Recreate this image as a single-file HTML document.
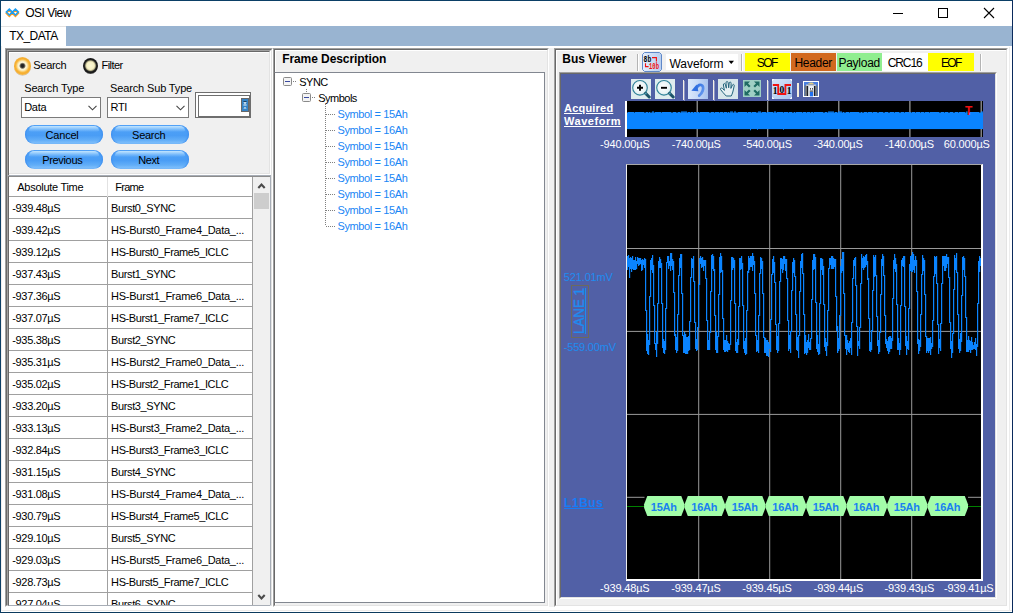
<!DOCTYPE html>
<html><head><meta charset="utf-8"><title>OSI View</title>
<style>
html,body{margin:0;padding:0;}
body{width:1013px;height:613px;overflow:hidden;background:#fff;font-family:"Liberation Sans",sans-serif;font-size:11px;color:#000;position:relative;}
.t{position:absolute;white-space:pre;}
.a{position:absolute;box-sizing:border-box;}
.btn{position:absolute;box-sizing:border-box;border-radius:10px;background:linear-gradient(#5aa8f8 0%,#4c9ff6 35%,#4a9df5 55%,#62aef8 80%,#8cc6fc 100%);box-shadow:inset 1.5px 0 1.5px -0.5px #3f8ff0,inset -1.5px 0 1.5px -0.5px #3f8ff0;}
.btn::before{content:"";position:absolute;left:4px;right:4px;top:1px;height:6px;border-radius:6px 6px 3px 3px/5px 5px 2px 2px;background:linear-gradient(rgba(200,232,255,0.95),rgba(150,205,255,0.55) 60%,rgba(120,190,255,0));}
.combo{position:absolute;box-sizing:border-box;background:#fff;border:1px solid #7a7a7a;}
</style></head><body>

<div class="a" style="left:0;top:0;width:1013px;height:613px;border:1px solid #0b3f66;border-right-color:#0a2a5c;border-bottom-color:#0b3a5e;"></div>
<div class="a" style="left:1px;top:26px;width:1011px;height:1px;background:#e4e4e4;"></div>
<div class="a" style="left:1px;top:610px;width:1011px;height:1px;background:#ececec;"></div>
<div class="a" style="left:1009px;top:47px;width:1px;height:563px;background:#ececec;"></div>
<div class="a" style="left:1px;top:27px;width:1px;height:584px;background:#f1eeee;"></div>
<svg class="a" style="left:5px;top:7px" width="15" height="12" viewBox="0 0 15 12">
<g fill="none" stroke-width="1.55" stroke-linejoin="miter">
<path d="M1.3 5.0 L4.3 2.0 L7.3 5.0 L4.3 8.0 Z M7.4 5.0 L10.4 2.0 L13.4 5.0 L10.4 8.0 Z" stroke="#ff9c1c" transform="translate(0,1.3)"/>
<path d="M1.3 5.0 L4.3 2.0 L7.3 5.0 L4.3 8.0 Z M7.4 5.0 L10.4 2.0 L13.4 5.0 L10.4 8.0 Z" stroke="#1a9df2"/>
</g></svg>
<span class="t" style="left:25.30px;top:7px;font-size:12px;line-height:12px;letter-spacing:-0.525px;">OSI View</span>
<svg class="a" style="left:880px;top:1px" width="130" height="25" viewBox="0 0 130 25">
<g stroke="#000" stroke-width="1" fill="none" shape-rendering="crispEdges">
<path d="M13 12.5 H23"/>
<rect x="58.5" y="7.5" width="9" height="9"/>
</g>
<g stroke="#000" stroke-width="1.1" fill="none"><path d="M104 7 L114 17 M114 7 L104 17"/></g>
</svg>
<div class="a" style="left:1px;top:26px;width:1011px;height:20px;background:#99b4d1;"></div>
<div class="a" style="left:1px;top:26px;width:65px;height:20px;background:#fff;border-top:1px solid #e2e2e2;"></div>
<span class="t" style="left:9.20px;top:30px;font-size:12px;line-height:12px;letter-spacing:-0.533px;">TX_DATA</span>
<div class="a" style="left:5px;top:48px;width:268px;height:559px;background:#f0f0f0;border:1px solid #a0a0a0;border-right-color:#fff;border-bottom-color:#fff;"></div>
<div class="a" style="left:6px;top:49px;width:266px;height:557px;border:1px solid #696969;border-right-color:#e3e3e3;border-bottom-color:#e3e3e3;"></div>
<div class="a" style="left:7px;top:50px;width:264px;height:555px;border:1px solid #a0a0a0;border-right-color:#fff;border-bottom-color:#fff;"></div>
<div class="a" style="left:8px;top:51px;width:262px;height:553px;border:1px solid #696969;border-right-color:#e3e3e3;border-bottom-color:#e3e3e3;"></div>
<div class="a" style="left:9px;top:52px;width:260px;height:1px;background:#fff;"></div>
<div class="a" style="left:9px;top:52px;width:1px;height:122px;background:#fff;"></div>
<div class="a" style="left:14px;top:57px;width:17px;height:17.5px;border-radius:50%;background:radial-gradient(circle at 50% 49%,#1d1d1d 0,#2a2a2a 1.6px,#8d8672 2.6px,#fbf4d6 3.4px,#fdf3cf 4.2px,#fbd98a 5.4px,#f8b73e 6.6px,#f6ae2e 7.6px,#f4b547 8.8px);box-shadow:0 0.5px 0.5px rgba(150,110,40,0.5);"></div>
<div class="a" style="left:83px;top:58px;width:15px;height:16px;border-radius:50%;background:radial-gradient(circle at 50% 48%,#fcf8d4 0,#f6f0c4 3.8px,#bdb78f 4.8px,#3a3a32 5.7px,#161616 6.4px,#1c1c1c 7.2px,#4a4a4a 8px);"></div>
<span class="t" style="left:33.30px;top:60px;font-size:11px;line-height:11px;letter-spacing:-0.309px;">Search</span>
<span class="t" style="left:101.50px;top:60px;font-size:11px;line-height:11px;letter-spacing:-0.540px;">Filter</span>
<span class="t" style="left:24.20px;top:83px;font-size:11px;line-height:11px;letter-spacing:-0.141px;">Search Type</span>
<span class="t" style="left:110.10px;top:83px;font-size:11px;line-height:11px;letter-spacing:-0.146px;">Search Sub Type</span>
<div class="combo" style="left:21px;top:97px;width:80px;height:21px;"><svg class="a" style="left:66px;top:7px" width="9" height="6" viewBox="0 0 9 6"><path d="M0.5 0.8 L4.5 4.8 L8.5 0.8" fill="none" stroke="#444" stroke-width="1.1"/></svg></div>
<div class="combo" style="left:107px;top:97px;width:82px;height:21px;"><svg class="a" style="left:68px;top:7px" width="9" height="6" viewBox="0 0 9 6"><path d="M0.5 0.8 L4.5 4.8 L8.5 0.8" fill="none" stroke="#444" stroke-width="1.1"/></svg></div>
<span class="t" style="left:24.20px;top:102px;font-size:11px;line-height:11px;letter-spacing:-0.309px;">Data</span>
<span class="t" style="left:110.50px;top:102px;font-size:11px;line-height:11px;letter-spacing:-0.340px;">RTI</span>
<div class="a" style="left:195px;top:92px;width:56px;height:26px;border:1px solid #6e6e6e;background:#fff;"></div>
<div class="a" style="left:198px;top:95px;width:52px;height:22px;border:1px solid #6e6e6e;background:#fff;"></div>
<svg class="a" style="left:241px;top:98px" width="8" height="14" viewBox="0 0 8 14"><rect x="0" y="0" width="8" height="14" fill="#686868"/><rect x="1" y="1" width="6" height="12" fill="#3584c8"/>
<path d="M2.4 3.2 H5.6 V4 H2.4 Z" fill="#16324c"/><path d="M2.4 4.2 H5.6 L4.6 5.8 H3.4 Z M2.4 6.6 H5.6 V7.4 H2.4 Z M2.4 10.6 Q4 7.8 5.6 10.6 Z" fill="#f2f7fb"/></svg>
<div class="btn" style="left:25px;top:125px;width:78px;height:19px;"></div>
<span class="t" style="left:45.60px;top:130px;font-size:11px;line-height:11px;letter-spacing:-0.207px;">Cancel</span>
<div class="btn" style="left:111px;top:125px;width:78px;height:19px;"></div>
<span class="t" style="left:132.10px;top:130px;font-size:11px;line-height:11px;letter-spacing:-0.275px;">Search</span>
<div class="btn" style="left:25px;top:150px;width:78px;height:19px;"></div>
<span class="t" style="left:42.30px;top:155px;font-size:11px;line-height:11px;letter-spacing:-0.349px;">Previous</span>
<div class="btn" style="left:111px;top:150px;width:78px;height:19px;"></div>
<span class="t" style="left:138.30px;top:155px;font-size:11px;line-height:11px;letter-spacing:-0.454px;">Next</span>
<div class="a" style="left:9px;top:173px;width:261px;height:1px;background:#e3e3e3;"></div><div class="a" style="left:9px;top:174px;width:262px;height:1px;background:#fff;"></div>
<div class="a" style="left:7px;top:175px;width:264px;height:431px;border:1px solid #a7adb6;border-left-color:#a0a0a0;border-bottom-color:#fff;"></div>
<div class="a" style="left:8px;top:176px;width:262px;height:430px;border:1px solid #8c8c8c;border-left-color:#696969;border-right:none;border-bottom-color:#a7adb6;background:#fff;overflow:hidden;" id="grid">
<div class="a" style="left:0;top:19px;width:244px;height:1px;background:#a0a0a0;"></div>
<div class="a" style="left:98px;top:0;width:1px;height:20px;background:#e2e2e2;"></div>
<div class="a" style="left:98px;top:20px;width:1px;height:420px;background:#a0a0a0;"></div>
<div class="a" style="left:243px;top:0;width:1px;height:440px;background:#a0a0a0;"></div>
<span class="t" style="left:8.30px;top:5px;font-size:11px;line-height:11px;letter-spacing:-0.284px;">Absolute Time</span>
<span class="t" style="left:106.20px;top:5px;font-size:11px;line-height:11px;letter-spacing:-0.716px;">Frame</span>
<span class="t" style="left:3.20px;top:26px;font-size:11px;line-height:11px;letter-spacing:-0.309px;">-939.48µS</span>
<span class="t" style="left:102.10px;top:26px;font-size:11px;line-height:11px;letter-spacing:-0.388px;">Burst0_SYNC</span>
<div class="a" style="left:0;top:41px;width:244px;height:1px;background:#a0a0a0;"></div>
<span class="t" style="left:3.20px;top:48px;font-size:11px;line-height:11px;letter-spacing:-0.309px;">-939.42µS</span>
<span class="t" style="left:102.10px;top:48px;font-size:11px;line-height:11px;letter-spacing:-0.255px;">HS-Burst0_Frame4_Data_...</span>
<div class="a" style="left:0;top:63px;width:244px;height:1px;background:#a0a0a0;"></div>
<span class="t" style="left:3.20px;top:70px;font-size:11px;line-height:11px;letter-spacing:-0.309px;">-939.12µS</span>
<span class="t" style="left:102.10px;top:70px;font-size:11px;line-height:11px;letter-spacing:-0.411px;">HS-Burst0_Frame5_ICLC</span>
<div class="a" style="left:0;top:85px;width:244px;height:1px;background:#a0a0a0;"></div>
<span class="t" style="left:3.20px;top:92px;font-size:11px;line-height:11px;letter-spacing:-0.309px;">-937.43µS</span>
<span class="t" style="left:102.10px;top:92px;font-size:11px;line-height:11px;letter-spacing:-0.388px;">Burst1_SYNC</span>
<div class="a" style="left:0;top:107px;width:244px;height:1px;background:#a0a0a0;"></div>
<span class="t" style="left:3.20px;top:114px;font-size:11px;line-height:11px;letter-spacing:-0.309px;">-937.36µS</span>
<span class="t" style="left:102.10px;top:114px;font-size:11px;line-height:11px;letter-spacing:-0.255px;">HS-Burst1_Frame6_Data_...</span>
<div class="a" style="left:0;top:129px;width:244px;height:1px;background:#a0a0a0;"></div>
<span class="t" style="left:3.20px;top:136px;font-size:11px;line-height:11px;letter-spacing:-0.309px;">-937.07µS</span>
<span class="t" style="left:102.10px;top:136px;font-size:11px;line-height:11px;letter-spacing:-0.411px;">HS-Burst1_Frame7_ICLC</span>
<div class="a" style="left:0;top:151px;width:244px;height:1px;background:#a0a0a0;"></div>
<span class="t" style="left:3.20px;top:158px;font-size:11px;line-height:11px;letter-spacing:-0.309px;">-935.38µS</span>
<span class="t" style="left:102.10px;top:158px;font-size:11px;line-height:11px;letter-spacing:-0.388px;">Burst2_SYNC</span>
<div class="a" style="left:0;top:173px;width:244px;height:1px;background:#a0a0a0;"></div>
<span class="t" style="left:3.20px;top:180px;font-size:11px;line-height:11px;letter-spacing:-0.309px;">-935.31µS</span>
<span class="t" style="left:102.10px;top:180px;font-size:11px;line-height:11px;letter-spacing:-0.255px;">HS-Burst2_Frame0_Data_...</span>
<div class="a" style="left:0;top:195px;width:244px;height:1px;background:#a0a0a0;"></div>
<span class="t" style="left:3.20px;top:202px;font-size:11px;line-height:11px;letter-spacing:-0.309px;">-935.02µS</span>
<span class="t" style="left:102.10px;top:202px;font-size:11px;line-height:11px;letter-spacing:-0.411px;">HS-Burst2_Frame1_ICLC</span>
<div class="a" style="left:0;top:217px;width:244px;height:1px;background:#a0a0a0;"></div>
<span class="t" style="left:3.20px;top:224px;font-size:11px;line-height:11px;letter-spacing:-0.309px;">-933.20µS</span>
<span class="t" style="left:102.10px;top:224px;font-size:11px;line-height:11px;letter-spacing:-0.388px;">Burst3_SYNC</span>
<div class="a" style="left:0;top:239px;width:244px;height:1px;background:#a0a0a0;"></div>
<span class="t" style="left:3.20px;top:246px;font-size:11px;line-height:11px;letter-spacing:-0.309px;">-933.13µS</span>
<span class="t" style="left:102.10px;top:246px;font-size:11px;line-height:11px;letter-spacing:-0.255px;">HS-Burst3_Frame2_Data_...</span>
<div class="a" style="left:0;top:261px;width:244px;height:1px;background:#a0a0a0;"></div>
<span class="t" style="left:3.20px;top:268px;font-size:11px;line-height:11px;letter-spacing:-0.309px;">-932.84µS</span>
<span class="t" style="left:102.10px;top:268px;font-size:11px;line-height:11px;letter-spacing:-0.411px;">HS-Burst3_Frame3_ICLC</span>
<div class="a" style="left:0;top:283px;width:244px;height:1px;background:#a0a0a0;"></div>
<span class="t" style="left:3.20px;top:290px;font-size:11px;line-height:11px;letter-spacing:-0.309px;">-931.15µS</span>
<span class="t" style="left:102.10px;top:290px;font-size:11px;line-height:11px;letter-spacing:-0.388px;">Burst4_SYNC</span>
<div class="a" style="left:0;top:305px;width:244px;height:1px;background:#a0a0a0;"></div>
<span class="t" style="left:3.20px;top:312px;font-size:11px;line-height:11px;letter-spacing:-0.309px;">-931.08µS</span>
<span class="t" style="left:102.10px;top:312px;font-size:11px;line-height:11px;letter-spacing:-0.255px;">HS-Burst4_Frame4_Data_...</span>
<div class="a" style="left:0;top:327px;width:244px;height:1px;background:#a0a0a0;"></div>
<span class="t" style="left:3.20px;top:334px;font-size:11px;line-height:11px;letter-spacing:-0.309px;">-930.79µS</span>
<span class="t" style="left:102.10px;top:334px;font-size:11px;line-height:11px;letter-spacing:-0.411px;">HS-Burst4_Frame5_ICLC</span>
<div class="a" style="left:0;top:349px;width:244px;height:1px;background:#a0a0a0;"></div>
<span class="t" style="left:3.20px;top:356px;font-size:11px;line-height:11px;letter-spacing:-0.309px;">-929.10µS</span>
<span class="t" style="left:102.10px;top:356px;font-size:11px;line-height:11px;letter-spacing:-0.388px;">Burst5_SYNC</span>
<div class="a" style="left:0;top:371px;width:244px;height:1px;background:#a0a0a0;"></div>
<span class="t" style="left:3.20px;top:378px;font-size:11px;line-height:11px;letter-spacing:-0.309px;">-929.03µS</span>
<span class="t" style="left:102.10px;top:378px;font-size:11px;line-height:11px;letter-spacing:-0.255px;">HS-Burst5_Frame6_Data_...</span>
<div class="a" style="left:0;top:393px;width:244px;height:1px;background:#a0a0a0;"></div>
<span class="t" style="left:3.20px;top:400px;font-size:11px;line-height:11px;letter-spacing:-0.309px;">-928.73µS</span>
<span class="t" style="left:102.10px;top:400px;font-size:11px;line-height:11px;letter-spacing:-0.411px;">HS-Burst5_Frame7_ICLC</span>
<div class="a" style="left:0;top:415px;width:244px;height:1px;background:#a0a0a0;"></div>
<span class="t" style="left:3.20px;top:422px;font-size:11px;line-height:11px;letter-spacing:-0.309px;">-927.04µS</span>
<span class="t" style="left:102.10px;top:422px;font-size:11px;line-height:11px;letter-spacing:-0.388px;">Burst6_SYNC</span>
<div class="a" style="left:0;top:437px;width:244px;height:1px;background:#a0a0a0;"></div>
<div class="a" style="left:244px;top:-1px;width:17px;height:440px;background:#f0f0f0;"></div>
<div class="a" style="left:245px;top:16px;width:15px;height:16px;background:#cdcdcd;"></div>
<svg class="a" style="left:248px;top:6px" width="9" height="6" viewBox="0 0 9 6"><path d="M1.3 5 L4.5 1.6 L7.7 5" fill="none" stroke="#4a4a4a" stroke-width="2.1"/></svg>
<svg class="a" style="left:248px;top:417px" width="9" height="6" viewBox="0 0 9 6"><path d="M1.3 1 L4.5 4.4 L7.7 1" fill="none" stroke="#4a4a4a" stroke-width="2.1"/></svg>
</div>
<div class="a" style="left:273px;top:48px;width:276px;height:559px;background:#f0f0f0;border:1px solid #a0a0a0;border-right-color:#fff;border-bottom-color:#fff;"></div>
<div class="a" style="left:274px;top:49px;width:274px;height:557px;border:1px solid #696969;border-right-color:#e3e3e3;border-bottom-color:#e3e3e3;"></div>
<div class="a" style="left:275px;top:50px;width:272px;height:1px;background:#fff;"></div>
<div class="a" style="left:275px;top:50px;width:1px;height:555px;background:#fff;"></div>
<span class="t" style="left:282.20px;top:53px;font-size:12px;line-height:12px;letter-spacing:-0.080px;font-weight:bold;">Frame Description</span>
<div class="a" style="left:274px;top:72px;width:271px;height:531px;background:#fff;border:1px solid #828790;border-left-color:#696969;"></div>
<svg class="a" style="left:283px;top:77px" width="9" height="9" viewBox="0 0 9 9"><rect x="0.5" y="0.5" width="8" height="8" rx="1" fill="#f4f4f4" stroke="#8a8a8a"/><path d="M2 4.5 H7" stroke="#3a4aa0" stroke-width="1"/></svg>
<svg class="a" style="left:302px;top:93px" width="9" height="9" viewBox="0 0 9 9"><rect x="0.5" y="0.5" width="8" height="8" rx="1" fill="#f4f4f4" stroke="#8a8a8a"/><path d="M2 4.5 H7" stroke="#3a4aa0" stroke-width="1"/></svg>
<div class="a" style="left:293px;top:81px;width:4px;height:1px;background-image:linear-gradient(90deg,#808080 50%,transparent 50%);background-size:2px 1px;"></div>
<div class="a" style="left:312px;top:97px;width:4px;height:1px;background-image:linear-gradient(90deg,#808080 50%,transparent 50%);background-size:2px 1px;"></div>
<div class="a" style="left:306px;top:89px;width:1px;height:4px;background-image:linear-gradient(180deg,#808080 50%,transparent 50%);background-size:1px 2px;"></div>
<div class="a" style="left:325px;top:104px;width:1px;height:122px;background-image:linear-gradient(180deg,#808080 50%,transparent 50%);background-size:1px 2px;"></div>
<span class="t" style="left:299.30px;top:77px;font-size:11px;line-height:11px;letter-spacing:-0.516px;">SYNC</span>
<span class="t" style="left:318.30px;top:93px;font-size:11px;line-height:11px;letter-spacing:-0.525px;">Symbols</span>
<div class="a" style="left:326px;top:114px;width:9px;height:1px;background-image:linear-gradient(90deg,#808080 50%,transparent 50%);background-size:2px 1px;"></div>
<span class="t" style="left:337.50px;top:109px;font-size:11px;line-height:11px;letter-spacing:-0.377px;color:#1a86f5;">Symbol = 15Ah</span>
<div class="a" style="left:326px;top:130px;width:9px;height:1px;background-image:linear-gradient(90deg,#808080 50%,transparent 50%);background-size:2px 1px;"></div>
<span class="t" style="left:337.50px;top:125px;font-size:11px;line-height:11px;letter-spacing:-0.377px;color:#1a86f5;">Symbol = 16Ah</span>
<div class="a" style="left:326px;top:146px;width:9px;height:1px;background-image:linear-gradient(90deg,#808080 50%,transparent 50%);background-size:2px 1px;"></div>
<span class="t" style="left:337.50px;top:141px;font-size:11px;line-height:11px;letter-spacing:-0.377px;color:#1a86f5;">Symbol = 15Ah</span>
<div class="a" style="left:326px;top:162px;width:9px;height:1px;background-image:linear-gradient(90deg,#808080 50%,transparent 50%);background-size:2px 1px;"></div>
<span class="t" style="left:337.50px;top:157px;font-size:11px;line-height:11px;letter-spacing:-0.377px;color:#1a86f5;">Symbol = 16Ah</span>
<div class="a" style="left:326px;top:178px;width:9px;height:1px;background-image:linear-gradient(90deg,#808080 50%,transparent 50%);background-size:2px 1px;"></div>
<span class="t" style="left:337.50px;top:173px;font-size:11px;line-height:11px;letter-spacing:-0.377px;color:#1a86f5;">Symbol = 15Ah</span>
<div class="a" style="left:326px;top:194px;width:9px;height:1px;background-image:linear-gradient(90deg,#808080 50%,transparent 50%);background-size:2px 1px;"></div>
<span class="t" style="left:337.50px;top:189px;font-size:11px;line-height:11px;letter-spacing:-0.377px;color:#1a86f5;">Symbol = 16Ah</span>
<div class="a" style="left:326px;top:210px;width:9px;height:1px;background-image:linear-gradient(90deg,#808080 50%,transparent 50%);background-size:2px 1px;"></div>
<span class="t" style="left:337.50px;top:205px;font-size:11px;line-height:11px;letter-spacing:-0.377px;color:#1a86f5;">Symbol = 15Ah</span>
<div class="a" style="left:326px;top:226px;width:9px;height:1px;background-image:linear-gradient(90deg,#808080 50%,transparent 50%);background-size:2px 1px;"></div>
<span class="t" style="left:337.50px;top:221px;font-size:11px;line-height:11px;letter-spacing:-0.377px;color:#1a86f5;">Symbol = 16Ah</span>
<div class="a" style="left:549px;top:48px;width:5px;height:559px;background:#f0f0f0;"></div>
<div class="a" style="left:554px;top:48px;width:454px;height:559px;background:#f0f0f0;border:1px solid #a0a0a0;border-right-color:#fff;border-bottom-color:#fff;"></div>
<div class="a" style="left:555px;top:49px;width:452px;height:557px;border:1px solid #696969;border-right-color:#e3e3e3;border-bottom-color:#e3e3e3;"></div>
<div class="a" style="left:556px;top:50px;width:450px;height:1px;background:#fff;"></div>
<div class="a" style="left:556px;top:50px;width:1px;height:555px;background:#fff;"></div>
<span class="t" style="left:562.30px;top:53px;font-size:12px;line-height:12px;letter-spacing:-0.028px;font-weight:bold;">Bus Viewer</span>
<div class="a" style="left:637px;top:54px;width:1px;height:17px;background:#b4b4b4;"></div><div class="a" style="left:638px;top:54px;width:1px;height:17px;background:#fff;"></div>
<div class="a" style="left:741px;top:54px;width:1px;height:17px;background:#b4b4b4;"></div><div class="a" style="left:742px;top:54px;width:1px;height:17px;background:#fff;"></div>
<div class="a" style="left:980px;top:54px;width:1px;height:17px;background:#b4b4b4;"></div><div class="a" style="left:981px;top:54px;width:1px;height:17px;background:#fff;"></div>
<svg class="a" style="left:642px;top:52px" width="20" height="20" viewBox="0 0 20 20">
<defs><linearGradient id="g8" x1="0" x2="1" y1="0" y2="0"><stop offset="0" stop-color="#e4eefc"/><stop offset="1" stop-color="#b7cef0"/></linearGradient></defs>
<path d="M2.5 0.5 H17.5 L19.5 2.5 V17.5 L17.5 19.5 H2.5 L0.5 17.5 V2.5 Z" fill="url(#g8)" stroke="#5f88c8"/>
<text x="1.6" y="9.8" font-family="Liberation Mono, monospace" font-size="9.5" font-weight="bold" fill="#000" textLength="7.6" lengthAdjust="spacingAndGlyphs">8b</text>
<text x="7" y="17" font-family="Liberation Mono, monospace" font-size="9.5" font-weight="bold" fill="#f01010" textLength="10" lengthAdjust="spacingAndGlyphs">10b</text>
<path d="M10 5.6 H14.4 V9.4 M3.5 11.2 V14.6 H6.6" fill="none" stroke="#f01010" stroke-width="1.1"/>
</svg>
<div class="a" style="left:666px;top:54px;width:72px;height:16px;background:#fff;"></div>
<span class="t" style="left:669.40px;top:58px;font-size:12px;line-height:12px;letter-spacing:-0.004px;">Waveform</span>
<svg class="a" style="left:728px;top:60px" width="7" height="5" viewBox="0 0 7 5"><path d="M0.5 0.8 H6 L3.25 4 Z" fill="#000"/></svg>
<div class="a" style="left:744.8px;top:53px;width:45.4px;height:18px;background:#ffff00;"></div>
<div class="a" style="left:791.0px;top:53px;width:44.6px;height:18px;background:#d2691e;"></div>
<div class="a" style="left:836.8px;top:53px;width:45.0px;height:18px;background:#90ee90;"></div>
<div class="a" style="left:881.8px;top:53px;width:46.2px;height:18px;background:#ffffff;"></div>
<div class="a" style="left:928.0px;top:53px;width:46.2px;height:18px;background:#ffff00;"></div>
<span class="t" style="left:756.80px;top:57px;font-size:12px;line-height:12px;letter-spacing:-1.623px;">SOF</span>
<span class="t" style="left:794.50px;top:57px;font-size:12px;line-height:12px;letter-spacing:-0.309px;">Header</span>
<span class="t" style="left:838.40px;top:57px;font-size:12px;line-height:12px;letter-spacing:-0.252px;">Payload</span>
<span class="t" style="left:887.70px;top:57px;font-size:12px;line-height:12px;letter-spacing:-1.089px;">CRC16</span>
<span class="t" style="left:940.90px;top:57px;font-size:12px;line-height:12px;letter-spacing:-1.556px;">EOF</span>
<div class="a" style="left:559px;top:72px;width:438px;height:527px;background:#5160a6;border:1px solid #a0a0a0;border-right-color:#fff;border-bottom-color:#fff;"></div>
<div class="a" style="left:560px;top:73px;width:436px;height:525px;border:1px solid #696969;border-right-color:#e3e3e3;border-bottom-color:#e3e3e3;"></div>
<svg class="a" style="left:631px;top:79px" width="20" height="20" viewBox="0 0 20 20">
<defs><radialGradient id="ga" cx="45%" cy="45%" r="60%"><stop offset="0" stop-color="#ffffff"/><stop offset="0.7" stop-color="#e9f3f5"/><stop offset="1" stop-color="#c5dde2"/></radialGradient></defs>
<rect width="20" height="20" fill="#dfecee"/>
<circle cx="9" cy="8.8" r="7.3" fill="url(#ga)" stroke="#2f8198" stroke-width="1.1"/>
<path d="M14.6 14.4 L18.2 18" stroke="#1d5468" stroke-width="3" stroke-linecap="round"/>
<path d="M14.2 14 L15.4 15.2" stroke="#4aa0b8" stroke-width="1.6"/>
<path d="M6 8.8 H12 M9 5.8 V11.8" stroke="#000" stroke-width="1.9"/>
</svg>
<svg class="a" style="left:655px;top:79px" width="20" height="20" viewBox="0 0 20 20">
<defs><radialGradient id="gb" cx="45%" cy="45%" r="60%"><stop offset="0" stop-color="#ffffff"/><stop offset="0.7" stop-color="#e9f3f5"/><stop offset="1" stop-color="#c5dde2"/></radialGradient></defs>
<rect width="20" height="20" fill="#dfecee"/>
<circle cx="9" cy="8.8" r="7.3" fill="url(#gb)" stroke="#2f8198" stroke-width="1.1"/>
<path d="M14.6 14.4 L18.2 18" stroke="#1d5468" stroke-width="3" stroke-linecap="round"/>
<path d="M14.2 14 L15.4 15.2" stroke="#4aa0b8" stroke-width="1.6"/>
<path d="M6 8.8 H12" stroke="#000" stroke-width="1.9"/>
</svg>
<div class="a" style="left:683px;top:80px;width:1px;height:20px;background:#f4f0e6;"></div><div class="a" style="left:684px;top:81px;width:1px;height:20px;background:#8d96c4;"></div>
<svg class="a" style="left:688px;top:79px" width="20" height="20" viewBox="0 0 20 20">
<defs><linearGradient id="gu" x1="0" x2="1" y1="0" y2="0"><stop offset="0" stop-color="#dbe9fb"/><stop offset="0.5" stop-color="#c4d8f6"/><stop offset="1" stop-color="#a6c1ed"/></linearGradient>
<linearGradient id="gz" x1="0" x2="1" y1="0" y2="1"><stop offset="0" stop-color="#2f6fe0"/><stop offset="1" stop-color="#6a9cf0"/></linearGradient></defs>
<rect width="20" height="20" fill="url(#gu)"/>
<path d="M8.2 9.8 C9.4 7 11.4 5.4 13.2 6 C15.2 6.8 15.4 9.6 14.6 12 C14 13.8 12.8 15.4 11.2 16.6" fill="none" stroke="url(#gz)" stroke-width="2.7" stroke-linecap="round"/>
<path d="M3.4 11.8 L8.6 5.6 L10.4 12.2 Z" fill="#2f6fe0"/>
</svg>
<div class="a" style="left:713px;top:80px;width:1px;height:20px;background:#f4f0e6;"></div><div class="a" style="left:714px;top:81px;width:1px;height:20px;background:#8d96c4;"></div>
<svg class="a" style="left:718px;top:79px" width="20" height="20" viewBox="0 0 20 20">
<rect width="20" height="20" fill="#d7e6ea"/>
<path d="M8.2 17 C6 14.8 4.2 12.6 2.6 10.6 C1.8 9.4 3.4 8.4 4.6 9.6 L6.4 11.4 L5.4 6 C5.1 4.4 6.9 4 7.3 5.4 L8.4 9.2 L8 3.8 C7.9 2.2 9.9 2.1 10.1 3.6 L10.7 8.8 L11.2 4 C11.4 2.6 13.2 2.8 13.1 4.3 L12.9 9.4 L14.4 6 C15 4.8 16.6 5.4 16.2 6.8 C15.6 9.2 15.4 11 14.8 13 C14.4 14.6 13.8 15.8 13.2 17 Z" fill="#e6f0f3" stroke="#23657c" stroke-width="1" stroke-linejoin="round"/>
</svg>
<svg class="a" style="left:743px;top:80px" width="18" height="17" viewBox="0 0 18 17">
<rect width="18" height="17" fill="#9fcfc4"/>
<g fill="#1f6b63"><path d="M1.5 1.5 H7 L5 3.4 L7.6 6 L6 7.6 L3.4 5 L1.5 7 Z"/>
<path d="M16.5 1.5 V7 L14.6 5 L12 7.6 L10.4 6 L13 3.4 L11 1.5 Z"/>
<path d="M1.5 15.5 V10 L3.4 12 L6 9.4 L7.6 11 L5 13.6 L7 15.5 Z"/>
<path d="M16.5 15.5 H11 L13 13.6 L10.4 11 L12 9.4 L14.6 12 L16.5 10 Z"/></g>
</svg>
<div class="a" style="left:767px;top:80px;width:1px;height:20px;background:#f4f0e6;"></div><div class="a" style="left:768px;top:81px;width:1px;height:20px;background:#8d96c4;"></div>
<svg class="a" style="left:772px;top:79px" width="20" height="20" viewBox="0 0 20 20">
<defs><linearGradient id="g1" x1="0" x2="1" y1="0" y2="1"><stop offset="0" stop-color="#d6e5fa"/><stop offset="1" stop-color="#a8c5ee"/></linearGradient></defs>
<rect x="0" y="0" width="20" height="20" fill="url(#g1)"/>
<path d="M0 0h2v1h-1v1h-1zM20 0h-2v1h1v1h1zM0 20h2v-1h-1v-1h-1zM20 20h-2v-1h1v-1h1z" fill="#f4f8fe"/>
<path d="M0.8 6 H6.2 V15 H13.4 V6 H19" fill="none" stroke="#f01414" stroke-width="1.8"/>
<g font-family="Liberation Serif, serif" font-size="9.5" font-weight="bold" fill="#000">
<text x="0.8" y="14.6">1</text><text x="7.4" y="13.8">0</text><text x="14.8" y="14.6">1</text></g>
</svg>
<div class="a" style="left:797px;top:83px;width:2px;height:14px;background:#f4eedc;"></div>
<svg class="a" style="left:803px;top:81px" width="16" height="16" viewBox="0 0 16 16">
<rect x="0.5" y="0.5" width="15" height="15" fill="#4a7fe0" stroke="#fff"/>
<path d="M3 3.5 H13 V15 H3 Z" fill="#c9ced6"/>
<path d="M5 2 H11 V4 H5 Z" fill="#9aa2ad"/>
<rect x="6.5" y="1.6" width="3.4" height="1.2" fill="#f3d878"/>
<path d="M1.4 4.5 H3.4 V15 H1.4 Z M12.6 4.5 H14.6 V15 H12.6 Z" fill="#6f7783"/>
<path d="M3.6 5 H5 V15 H3.6 Z M11 5 H12.4 V15 H11 Z" fill="#1c1f26"/>
<path d="M6 5 H10.4 V9.5 H6 Z" fill="#eef1f5"/>
<path d="M7 7.2h1v1.2h-1zM9 7.2h1v1.2h-1z" fill="#222"/>
<path d="M7 9.6 H10 V10.6 H7 Z" fill="#3a3f48"/>
<rect x="7" y="11" width="3" height="4.4" fill="#1f6ff0"/>
</svg>
<span class="t" style="left:564.00px;top:103px;font-size:11px;line-height:11px;letter-spacing:0.204px;font-weight:bold;color:#fff;text-decoration:underline;">Acquired</span>
<span class="t" style="left:564.00px;top:116px;font-size:11px;line-height:11px;letter-spacing:0.529px;font-weight:bold;color:#fff;text-decoration:underline;">Waveform</span>
<div class="a" style="left:625px;top:101px;width:358px;height:36px;background:#000;border-left:2px solid #fff;"></div>
<svg class="a" style="left:627px;top:101px" width="356" height="36" viewBox="627 101 356 36"><rect x="696.6" y="100" width="1.2" height="37" fill="#a0a0a0"/><rect x="767.1" y="100" width="1.2" height="37" fill="#a0a0a0"/><rect x="838.2" y="100" width="1.2" height="37" fill="#a0a0a0"/><rect x="909.3" y="100" width="1.2" height="37" fill="#a0a0a0"/><rect x="980.6" y="100" width="1.2" height="37" fill="#a0a0a0"/><rect x="627" y="112.5" width="356" height="16.6" fill="#0a84ff"/><path d="M628 112.0h6v1.2h-6zM635 111.9h9v1.2h-9zM646 111.9h2v1.2h-2zM649 112.0h1v1.2h-1zM652 111.5h2v1.2h-2zM655 112.0h6v1.2h-6zM662 112.0h9v1.2h-9zM673 112.0h3v1.2h-3zM678 111.9h2v1.2h-2zM681 111.5h6v1.2h-6zM688 111.9h2v1.2h-2zM691 112.0h2v1.2h-2zM694 112.0h2v1.2h-2zM697 112.0h2v1.2h-2zM700 112.0h9v1.2h-9zM711 111.9h3v1.2h-3zM715 112.0h4v1.2h-4zM720 111.9h3v1.2h-3zM724 111.9h3v1.2h-3zM728 112.0h1v1.2h-1zM730 111.5h3v1.2h-3zM734 111.5h2v1.2h-2zM738 112.0h9v1.2h-9zM748 111.9h3v1.2h-3zM752 111.9h4v1.2h-4zM758 111.5h3v1.2h-3zM762 111.9h4v1.2h-4zM767 112.0h6v1.2h-6zM774 111.5h2v1.2h-2zM777 112.0h6v1.2h-6zM784 111.9h4v1.2h-4zM789 111.9h3v1.2h-3zM794 112.0h1v1.2h-1zM796 112.0h6v1.2h-6zM803 112.0h3v1.2h-3zM807 112.0h3v1.2h-3zM811 111.9h2v1.2h-2zM814 112.0h9v1.2h-9zM825 111.9h2v1.2h-2zM828 111.5h6v1.2h-6zM835 112.0h2v1.2h-2zM838 111.5h4v1.2h-4zM843 111.9h1v1.2h-1zM846 112.0h3v1.2h-3zM850 112.0h9v1.2h-9zM861 112.0h1v1.2h-1zM864 112.0h3v1.2h-3zM868 112.0h4v1.2h-4zM873 112.0h4v1.2h-4zM879 112.0h4v1.2h-4zM885 112.0h3v1.2h-3zM890 112.0h4v1.2h-4zM895 112.0h4v1.2h-4zM901 112.0h3v1.2h-3zM905 112.0h4v1.2h-4zM910 112.0h1v1.2h-1zM912 112.0h3v1.2h-3zM916 112.0h4v1.2h-4zM921 112.0h3v1.2h-3zM925 112.0h4v1.2h-4zM930 112.0h9v1.2h-9zM941 112.0h3v1.2h-3zM945 112.0h3v1.2h-3zM950 112.0h3v1.2h-3zM955 112.0h3v1.2h-3zM959 112.0h6v1.2h-6zM966 111.5h3v1.2h-3zM970 111.9h9v1.2h-9zM981 111.5h2v1.2h-2z" fill="#0a84ff"/><path d="M750 129h1v1.2h-1zM757 129h1v0.8h-1zM783 129h1v0.8h-1z" fill="#0a84ff"/></svg>
<span class="t" style="left:965.00px;top:105px;font-size:12px;line-height:12px;letter-spacing:-0.330px;font-weight:bold;color:#ee1111;">T</span>
<span class="t" style="left:600.00px;top:139px;font-size:11px;line-height:11px;letter-spacing:-0.153px;color:#fff;">-940.00µS</span>
<span class="t" style="left:671.70px;top:139px;font-size:11px;line-height:11px;letter-spacing:-0.220px;color:#fff;">-740.00µS</span>
<span class="t" style="left:742.80px;top:139px;font-size:11px;line-height:11px;letter-spacing:-0.220px;color:#fff;">-540.00µS</span>
<span class="t" style="left:813.60px;top:139px;font-size:11px;line-height:11px;letter-spacing:-0.220px;color:#fff;">-340.00µS</span>
<span class="t" style="left:884.80px;top:139px;font-size:11px;line-height:11px;letter-spacing:-0.220px;color:#fff;">-140.00µS</span>
<span class="t" style="left:943.80px;top:139px;font-size:11px;line-height:11px;letter-spacing:-0.165px;color:#fff;">60.000µS</span>
<div class="a" style="left:626px;top:164px;width:357px;height:417px;background:#000;border:1px solid #a8a8a8;border-bottom:2px solid #fff;border-right:2px solid #fff;border-left-color:#ececec"></div>
<svg class="a" style="left:627px;top:165px" width="354" height="414" viewBox="627 165 354 414"><rect x="698.2" y="165" width="1" height="415" fill="#9a9a9a"/><rect x="769.2" y="165" width="1" height="415" fill="#9a9a9a"/><rect x="840.2" y="165" width="1" height="415" fill="#9a9a9a"/><rect x="911.2" y="165" width="1" height="415" fill="#9a9a9a"/><rect x="627" y="248.0" width="356" height="1" fill="#9a9a9a"/><rect x="627" y="330.9" width="356" height="1" fill="#9a9a9a"/><rect x="627" y="413.9" width="356" height="1" fill="#9a9a9a"/><rect x="627" y="496.8" width="17.5" height="1" fill="#9a9a9a"/><rect x="968" y="496.8" width="14" height="1" fill="#9a9a9a"/><path d="M627 256h1.2v14h-1.2zM628 255h1.2v12h-1.2zM629 258h1.2v20h-1.2zM630 257h1.2v12h-1.2zM631 258h1.2v14h-1.2zM632 256h1.2v13h-1.2zM633 260h1.2v10h-1.2zM634 260h1.2v10h-1.2zM635 257h1.2v13h-1.2zM636 261h1.2v8h-1.2zM637 257h1.2v7h-1.2zM638 258h1.2v8h-1.2zM639 258h1.2v7h-1.2zM640 258h1.2v6h-1.2zM641 260h1.2v11h-1.2zM642 259h1.2v11h-1.2zM643 260h1.2v5h-1.2zM644 258h1.2v10h-1.2zM645 259h1.2v52h-1.2zM646 310h1.2v41h-1.2zM647 334h1.2v20h-1.2zM648 340h1.2v15h-1.2zM649 296h1.2v49h-1.2zM650 260h1.2v37h-1.2zM651 258h1.2v12h-1.2zM652 255h1.2v18h-1.2zM653 265h1.2v41h-1.2zM654 305h1.2v39h-1.2zM655 343h1.2v7h-1.2zM656 332h1.2v25h-1.2zM657 303h1.2v41h-1.2zM658 261h1.2v43h-1.2zM659 257h1.2v11h-1.2zM660 259h1.2v9h-1.2zM661 263h1.2v41h-1.2zM662 303h1.2v45h-1.2zM663 339h1.2v14h-1.2zM664 341h1.2v13h-1.2zM665 308h1.2v42h-1.2zM666 262h1.2v47h-1.2zM667 256h1.2v7h-1.2zM668 256h1.2v13h-1.2zM669 261h1.2v5h-1.2zM670 253h1.2v18h-1.2zM671 253h1.2v13h-1.2zM672 259h1.2v11h-1.2zM673 261h1.2v32h-1.2zM674 292h1.2v44h-1.2zM675 334h1.2v16h-1.2zM676 337h1.2v16h-1.2zM677 314h1.2v37h-1.2zM678 275h1.2v40h-1.2zM679 258h1.2v18h-1.2zM680 254h1.2v14h-1.2zM681 254h1.2v40h-1.2zM682 293h1.2v43h-1.2zM683 335h1.2v18h-1.2zM684 332h1.2v21h-1.2zM685 334h1.2v20h-1.2zM686 337h1.2v17h-1.2zM687 337h1.2v17h-1.2zM688 336h1.2v15h-1.2zM689 321h1.2v29h-1.2zM690 277h1.2v45h-1.2zM691 258h1.2v20h-1.2zM692 259h1.2v9h-1.2zM693 256h1.2v26h-1.2zM694 281h1.2v42h-1.2zM695 322h1.2v27h-1.2zM696 339h1.2v12h-1.2zM697 327h1.2v23h-1.2zM698 284h1.2v44h-1.2zM699 258h1.2v27h-1.2zM700 256h1.2v8h-1.2zM701 258h1.2v10h-1.2zM702 257h1.2v10h-1.2zM703 260h1.2v11h-1.2zM704 260h1.2v6h-1.2zM705 260h1.2v19h-1.2zM706 278h1.2v43h-1.2zM707 320h1.2v30h-1.2zM708 340h1.2v10h-1.2zM709 332h1.2v18h-1.2zM710 291h1.2v42h-1.2zM711 255h1.2v37h-1.2zM712 254h1.2v15h-1.2zM713 256h1.2v15h-1.2zM714 269h1.2v47h-1.2zM715 315h1.2v35h-1.2zM716 332h1.2v21h-1.2zM717 336h1.2v17h-1.2zM718 294h1.2v43h-1.2zM719 257h1.2v38h-1.2zM720 253h1.2v20h-1.2zM721 256h1.2v16h-1.2zM722 270h1.2v49h-1.2zM723 318h1.2v32h-1.2zM724 340h1.2v12h-1.2zM725 340h1.2v12h-1.2zM726 335h1.2v16h-1.2zM727 341h1.2v11h-1.2zM728 343h1.2v7h-1.2zM729 344h1.2v6h-1.2zM730 300h1.2v45h-1.2zM731 257h1.2v44h-1.2zM732 257h1.2v13h-1.2zM733 258h1.2v10h-1.2zM734 260h1.2v44h-1.2zM735 303h1.2v48h-1.2zM736 342h1.2v11h-1.2zM737 339h1.2v14h-1.2zM738 306h1.2v39h-1.2zM739 258h1.2v49h-1.2zM740 258h1.2v12h-1.2zM741 256h1.2v13h-1.2zM742 263h1.2v43h-1.2zM743 305h1.2v44h-1.2zM744 341h1.2v12h-1.2zM745 338h1.2v17h-1.2zM746 310h1.2v44h-1.2zM747 271h1.2v40h-1.2zM748 256h1.2v17h-1.2zM749 258h1.2v12h-1.2zM750 256h1.2v11h-1.2zM751 256h1.2v11h-1.2zM752 253h1.2v18h-1.2zM753 256h1.2v9h-1.2zM754 261h1.2v33h-1.2zM755 293h1.2v43h-1.2zM756 335h1.2v17h-1.2zM757 340h1.2v11h-1.2zM758 315h1.2v38h-1.2zM759 273h1.2v43h-1.2zM760 257h1.2v17h-1.2zM761 258h1.2v11h-1.2zM762 261h1.2v33h-1.2zM763 293h1.2v45h-1.2zM764 337h1.2v16h-1.2zM765 338h1.2v15h-1.2zM766 340h1.2v16h-1.2zM767 340h1.2v16h-1.2zM768 342h1.2v15h-1.2zM769 344h1.2v5h-1.2zM770 319h1.2v33h-1.2zM771 274h1.2v46h-1.2zM772 259h1.2v16h-1.2zM773 256h1.2v17h-1.2zM774 262h1.2v21h-1.2zM775 282h1.2v43h-1.2zM776 324h1.2v26h-1.2zM777 336h1.2v17h-1.2zM778 323h1.2v28h-1.2zM779 281h1.2v43h-1.2zM780 258h1.2v24h-1.2zM781 258h1.2v11h-1.2zM782 259h1.2v14h-1.2zM783 256h1.2v14h-1.2zM784 256h1.2v8h-1.2zM785 259h1.2v12h-1.2zM786 259h1.2v20h-1.2zM787 278h1.2v43h-1.2zM788 320h1.2v31h-1.2zM789 335h1.2v14h-1.2zM790 331h1.2v22h-1.2zM791 290h1.2v42h-1.2zM792 262h1.2v29h-1.2zM793 258h1.2v15h-1.2zM794 260h1.2v17h-1.2zM795 276h1.2v39h-1.2zM796 314h1.2v36h-1.2zM797 337h1.2v14h-1.2zM798 335h1.2v23h-1.2zM799 291h1.2v45h-1.2zM800 261h1.2v31h-1.2zM801 254h1.2v14h-1.2zM802 253h1.2v21h-1.2zM803 273h1.2v42h-1.2zM804 314h1.2v40h-1.2zM805 335h1.2v18h-1.2zM806 342h1.2v13h-1.2zM807 340h1.2v13h-1.2zM808 334h1.2v14h-1.2zM809 342h1.2v8h-1.2zM810 338h1.2v12h-1.2zM811 299h1.2v40h-1.2zM812 260h1.2v40h-1.2zM813 254h1.2v16h-1.2zM814 254h1.2v15h-1.2zM815 257h1.2v46h-1.2zM816 302h1.2v47h-1.2zM817 335h1.2v17h-1.2zM818 344h1.2v11h-1.2zM819 303h1.2v51h-1.2zM820 258h1.2v46h-1.2zM821 258h1.2v12h-1.2zM822 259h1.2v16h-1.2zM823 266h1.2v39h-1.2zM824 304h1.2v43h-1.2zM825 338h1.2v13h-1.2zM826 342h1.2v14h-1.2zM827 310h1.2v36h-1.2zM828 268h1.2v43h-1.2zM829 258h1.2v11h-1.2zM830 258h1.2v7h-1.2zM831 256h1.2v13h-1.2zM832 256h1.2v13h-1.2zM833 258h1.2v11h-1.2zM834 259h1.2v8h-1.2zM835 259h1.2v38h-1.2zM836 296h1.2v35h-1.2zM837 326h1.2v27h-1.2zM838 338h1.2v13h-1.2zM839 315h1.2v34h-1.2zM840 266h1.2v50h-1.2zM841 259h1.2v14h-1.2zM842 252h1.2v19h-1.2zM843 252h1.2v42h-1.2zM844 293h1.2v43h-1.2zM845 335h1.2v14h-1.2zM846 335h1.2v20h-1.2zM847 340h1.2v10h-1.2zM848 343h1.2v9h-1.2zM849 341h1.2v12h-1.2zM850 338h1.2v10h-1.2zM851 322h1.2v33h-1.2zM852 278h1.2v45h-1.2zM853 260h1.2v19h-1.2zM854 258h1.2v8h-1.2zM855 257h1.2v29h-1.2zM856 285h1.2v42h-1.2zM857 326h1.2v30h-1.2zM858 341h1.2v5h-1.2zM859 327h1.2v22h-1.2zM860 283h1.2v45h-1.2zM861 254h1.2v30h-1.2zM862 258h1.2v10h-1.2zM863 256h1.2v14h-1.2zM864 257h1.2v11h-1.2zM865 255h1.2v12h-1.2zM866 254h1.2v11h-1.2zM867 261h1.2v19h-1.2zM868 278h1.2v41h-1.2zM869 318h1.2v33h-1.2zM870 342h1.2v10h-1.2zM871 330h1.2v20h-1.2zM872 290h1.2v41h-1.2zM873 255h1.2v36h-1.2zM874 257h1.2v20h-1.2zM875 255h1.2v21h-1.2zM876 275h1.2v42h-1.2zM877 316h1.2v30h-1.2zM878 340h1.2v14h-1.2zM879 332h1.2v20h-1.2zM880 294h1.2v39h-1.2zM881 259h1.2v36h-1.2zM882 254h1.2v12h-1.2zM883 256h1.2v20h-1.2zM884 275h1.2v41h-1.2zM885 315h1.2v29h-1.2zM886 339h1.2v9h-1.2zM887 341h1.2v10h-1.2zM888 337h1.2v17h-1.2zM889 336h1.2v16h-1.2zM890 336h1.2v13h-1.2zM891 338h1.2v11h-1.2zM892 298h1.2v43h-1.2zM893 260h1.2v39h-1.2zM894 254h1.2v15h-1.2zM895 258h1.2v14h-1.2zM896 264h1.2v41h-1.2zM897 304h1.2v46h-1.2zM898 338h1.2v12h-1.2zM899 343h1.2v12h-1.2zM900 305h1.2v45h-1.2zM901 260h1.2v46h-1.2zM902 258h1.2v8h-1.2zM903 256h1.2v11h-1.2zM904 256h1.2v51h-1.2zM905 306h1.2v40h-1.2zM906 336h1.2v19h-1.2zM907 341h1.2v8h-1.2zM908 308h1.2v42h-1.2zM909 264h1.2v45h-1.2zM910 256h1.2v15h-1.2zM911 255h1.2v17h-1.2zM912 252h1.2v20h-1.2zM913 254h1.2v16h-1.2zM914 260h1.2v13h-1.2zM915 256h1.2v10h-1.2zM916 260h1.2v32h-1.2zM917 291h1.2v53h-1.2zM918 339h1.2v15h-1.2zM919 340h1.2v11h-1.2zM920 314h1.2v33h-1.2zM921 274h1.2v41h-1.2zM922 255h1.2v20h-1.2zM923 258h1.2v13h-1.2zM924 260h1.2v35h-1.2zM925 294h1.2v43h-1.2zM926 336h1.2v17h-1.2zM927 338h1.2v13h-1.2zM928 338h1.2v15h-1.2zM929 338h1.2v13h-1.2zM930 337h1.2v18h-1.2zM931 343h1.2v6h-1.2zM932 320h1.2v27h-1.2zM933 276h1.2v45h-1.2zM934 256h1.2v21h-1.2zM935 257h1.2v17h-1.2zM936 256h1.2v28h-1.2zM937 283h1.2v42h-1.2zM938 324h1.2v30h-1.2zM939 339h1.2v9h-1.2zM940 323h1.2v28h-1.2zM941 283h1.2v41h-1.2zM942 256h1.2v28h-1.2zM943 256h1.2v10h-1.2zM944 256h1.2v15h-1.2zM945 256h1.2v15h-1.2zM946 254h1.2v14h-1.2zM947 257h1.2v7h-1.2zM948 257h1.2v21h-1.2zM949 277h1.2v46h-1.2zM950 322h1.2v27h-1.2zM951 341h1.2v17h-1.2zM952 333h1.2v20h-1.2zM953 289h1.2v45h-1.2zM954 255h1.2v35h-1.2zM955 258h1.2v12h-1.2zM956 253h1.2v20h-1.2zM957 272h1.2v43h-1.2zM958 314h1.2v35h-1.2zM959 339h1.2v14h-1.2zM960 333h1.2v18h-1.2zM961 295h1.2v47h-1.2zM962 257h1.2v39h-1.2zM963 256h1.2v14h-1.2zM964 258h1.2v19h-1.2zM965 276h1.2v42h-1.2zM966 317h1.2v35h-1.2zM967 340h1.2v12h-1.2zM968 336h1.2v16h-1.2zM969 340h1.2v10h-1.2zM970 341h1.2v12h-1.2zM971 337h1.2v13h-1.2zM972 342h1.2v8h-1.2zM973 345h1.2v4h-1.2zM974 342h1.2v7h-1.2zM975 338h1.2v12h-1.2zM976 344h1.2v12h-1.2zM977 303h1.2v44h-1.2zM978 261h1.2v43h-1.2zM979 256h1.2v16h-1.2zM980 258h1.2v8h-1.2z" fill="#0a84ff"/><rect x="627" y="506" width="356" height="1" fill="#008000"/><path d="M644.1 504.2 L647.3 496.1 H681.3 L684.5 504.2 V507.8 L681.3 515.9 H647.3 L644.1 507.8 Z" fill="#a3fda9"/><path d="M684.6 504.2 L687.8 496.1 H721.8 L725.0 504.2 V507.8 L721.8 515.9 H687.8 L684.6 507.8 Z" fill="#a3fda9"/><path d="M725.1 504.2 L728.3 496.1 H762.3 L765.5 504.2 V507.8 L762.3 515.9 H728.3 L725.1 507.8 Z" fill="#a3fda9"/><path d="M765.6 504.2 L768.8 496.1 H802.8 L806.0 504.2 V507.8 L802.8 515.9 H768.8 L765.6 507.8 Z" fill="#a3fda9"/><path d="M806.1 504.2 L809.3 496.1 H843.3 L846.5 504.2 V507.8 L843.3 515.9 H809.3 L806.1 507.8 Z" fill="#a3fda9"/><path d="M846.6 504.2 L849.8 496.1 H883.8 L887.0 504.2 V507.8 L883.8 515.9 H849.8 L846.6 507.8 Z" fill="#a3fda9"/><path d="M887.1 504.2 L890.3 496.1 H924.3 L927.5 504.2 V507.8 L924.3 515.9 H890.3 L887.1 507.8 Z" fill="#a3fda9"/><path d="M927.6 504.2 L930.8 496.1 H964.8 L968.0 504.2 V507.8 L964.8 515.9 H930.8 L927.6 507.8 Z" fill="#a3fda9"/></svg>
<span class="t" style="left:650.70px;top:502px;font-size:11px;line-height:11px;letter-spacing:-0.174px;font-weight:bold;color:#1a80f0;">15Ah</span>
<span class="t" style="left:691.20px;top:502px;font-size:11px;line-height:11px;letter-spacing:-0.174px;font-weight:bold;color:#1a80f0;">16Ah</span>
<span class="t" style="left:731.70px;top:502px;font-size:11px;line-height:11px;letter-spacing:-0.174px;font-weight:bold;color:#1a80f0;">15Ah</span>
<span class="t" style="left:772.20px;top:502px;font-size:11px;line-height:11px;letter-spacing:-0.174px;font-weight:bold;color:#1a80f0;">16Ah</span>
<span class="t" style="left:812.70px;top:502px;font-size:11px;line-height:11px;letter-spacing:-0.174px;font-weight:bold;color:#1a80f0;">15Ah</span>
<span class="t" style="left:853.20px;top:502px;font-size:11px;line-height:11px;letter-spacing:-0.174px;font-weight:bold;color:#1a80f0;">16Ah</span>
<span class="t" style="left:893.70px;top:502px;font-size:11px;line-height:11px;letter-spacing:-0.174px;font-weight:bold;color:#1a80f0;">15Ah</span>
<span class="t" style="left:934.20px;top:502px;font-size:11px;line-height:11px;letter-spacing:-0.174px;font-weight:bold;color:#1a80f0;">16Ah</span>
<span class="t" style="left:600.00px;top:583px;font-size:11px;line-height:11px;letter-spacing:-0.164px;color:#fff;">-939.48µS</span>
<span class="t" style="left:671.20px;top:583px;font-size:11px;line-height:11px;letter-spacing:-0.164px;color:#fff;">-939.47µS</span>
<span class="t" style="left:742.20px;top:583px;font-size:11px;line-height:11px;letter-spacing:-0.164px;color:#fff;">-939.45µS</span>
<span class="t" style="left:813.70px;top:583px;font-size:11px;line-height:11px;letter-spacing:-0.164px;color:#fff;">-939.44µS</span>
<span class="t" style="left:884.60px;top:583px;font-size:11px;line-height:11px;letter-spacing:-0.164px;color:#fff;">-939.43µS</span>
<span class="t" style="left:944.00px;top:583px;font-size:11px;line-height:11px;letter-spacing:-0.164px;color:#fff;">-939.41µS</span>
<span class="t" style="left:563.80px;top:272px;font-size:11px;line-height:11px;letter-spacing:-0.143px;color:#1e8cf0;">521.01mV</span>
<span class="t" style="left:563.80px;top:342px;font-size:11px;line-height:11px;letter-spacing:-0.201px;color:#1e8cf0;">-559.00mV</span>
<span class="t" style="left:564.00px;top:497px;font-size:12px;line-height:12px;letter-spacing:0.566px;font-weight:bold;color:#167cf6;text-decoration:underline;">L1Bus</span>
<div class="a" style="left:571px;top:285px;width:18px;height:53px;border:1px solid #6b6a5e;"></div>
<span class="t" style="left:578px;top:311px;font-size:15px;line-height:15px;color:#1e8cf0;-webkit-text-stroke:0.35px #1e8cf0;transform:translate(-50%,-50%) rotate(-90deg) scaleX(0.89);transform-origin:50% 50%;">LANE 1</span>
<div class="a" style="left:585px;top:288px;width:1.3px;height:46px;background:#1e8cf0;"></div>
</body></html>
